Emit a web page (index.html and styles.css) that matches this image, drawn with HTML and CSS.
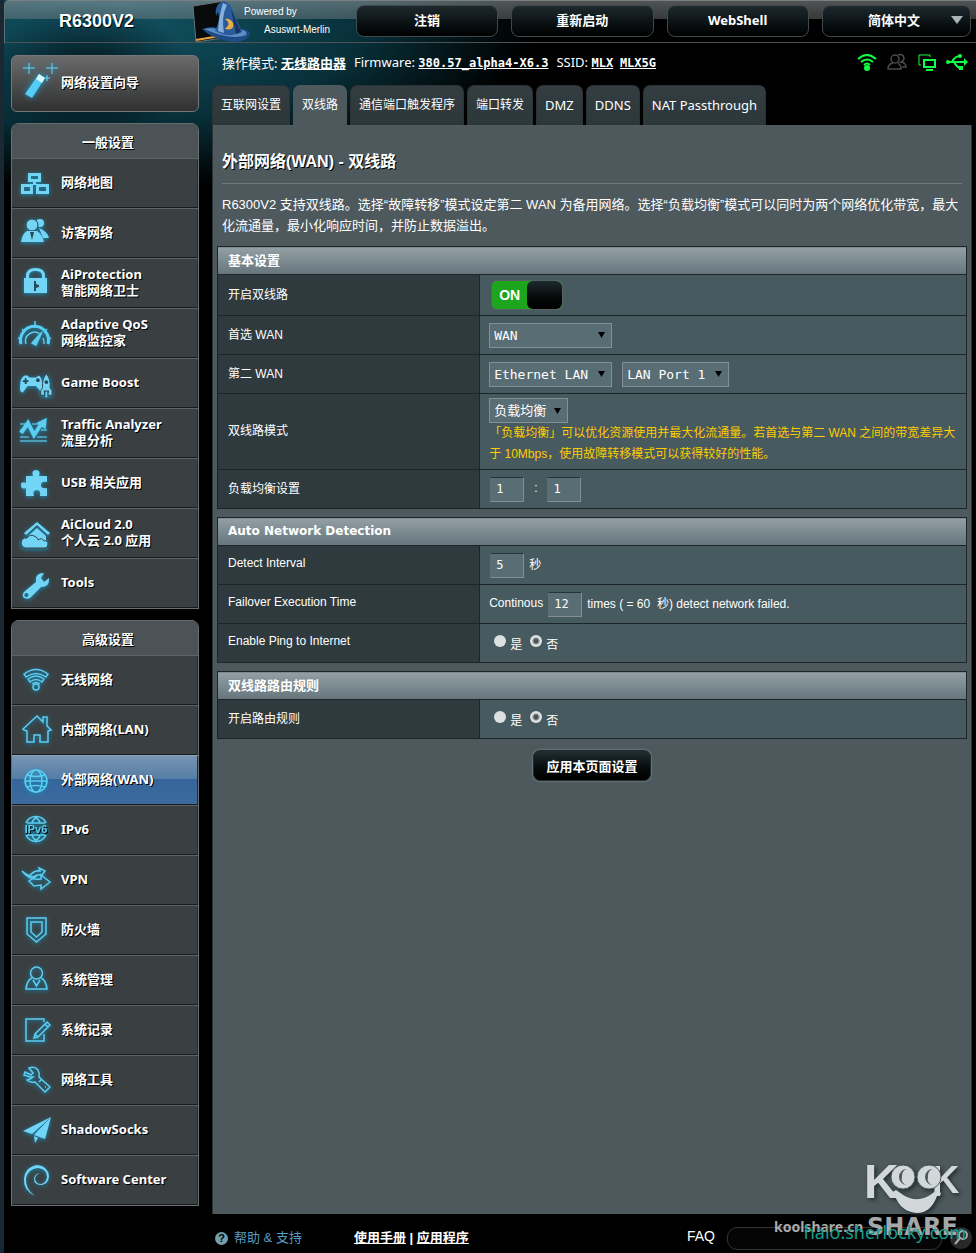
FILE: index.html
```html
<!DOCTYPE html>
<html lang="zh-CN">
<head>
  <meta charset="UTF-8">
  <title>R6300V2 - 双线路</title>
  <link rel="stylesheet" href="styles.css">
</head>
<body>
  <div class="page">
    <header class="top">
      <div class="model">R6300V2</div>
      <div class="brand">
        <svg class="hat" viewBox="0 0 60 42" aria-hidden="true">
          <path d="M1 5 33 0 38 36 4 41Z" fill="#080a0b" stroke="#6b7474"/>
          <path d="M4 39 28 35" stroke="#e9a33a" stroke-width="2"/>
          <path d="M10 28Q22 24 26 28L50 28Q58 29 58 33Q55 41 40 41Q20 38 10 28Z" fill="#1f4c86"/>
          <path d="M12 28Q22 26 27 29L50 29Q56 30 54 34Q40 40 12 28Z" fill="#5c8fc4"/>
          <path d="M23 30Q29 18 26 11L24 15Q22 3 32 0Q38 2 41 10L50 31Q38 38 23 30Z" fill="#2a5c9c"/>
          <path d="M31 2Q27 14 26 30L32 32Q29 15 35 4Z" fill="#83b0dc"/>
          <path d="M39 8 49 31 44 33Z" fill="#173563"/>
          <path d="M33 18Q40 22 33 28Q43 30 41 22Q38 17 33 18Z" fill="#e8ae45"/>
        </svg>
        <div class="powered"><span>Powered by</span><span class="merlin">Asuswrt-Merlin</span></div>
      </div>
      <nav class="top-buttons">
        <button type="button">注销</button>
        <button type="button">重新启动</button>
        <button type="button">WebShell</button>
        <button type="button" class="lang">简体中文<span class="caret"></span></button>
      </nav>
    </header>

    <div class="columns">
      <aside class="side">
        <a class="wizard" href="#">
          <svg viewBox="0 0 40 40" aria-hidden="true">
            <path d="M18 12 24 16 11 36 4 32Z" fill="#55cdf5"/>
            <path d="M18 12 24 16 21 21 15 17Z" fill="#d5f6ff"/>
            <path d="M8 1V12M2 6H14M31 1V12M25 6H37M26 13V19M23 16H29" stroke="#63d8fa"/>
          </svg>
          <span>网络设置向导</span>
        </a>

        <nav class="menu">
          <h2>一般设置</h2>
          <a href="#"><svg class="solid" viewBox="0 0 32 32"><path fill-rule="evenodd" d="M8 5H21V14H16V16H29V26H16V17H13V26H1V16H13V14H8ZM11 8V11H18V8ZM4 19V23H10V19ZM19 19V23H26V19Z"/></svg><span>网络地图</span></a>
          <a href="#"><svg class="solid" viewBox="0 0 32 32"><circle cx="20" cy="5" r="4"/><path d="M19 10Q27 13 29 20H23Z"/><circle cx="12" cy="7" r="6" stroke="#3a4042"/><path d="M7 13H17Q22 16 24 24H1Q2 16 7 13Z"/><path class="cut" d="M10 14 12 22 14 14Z"/></svg><span>访客网络</span></a>
          <a href="#"><svg class="solid" viewBox="0 0 32 32"><path fill-rule="evenodd" d="M6 10V8Q6 0 15.500 0Q25 0 25 8V10H27V25H4V10ZM9 10H22V8Q22 3 15.500 3Q9 3 9 8Z"/><path class="cut" d="M14 13H16V16L19 17V19L16 20V23H14Z"/></svg><span>AiProtection<br>智能网络卫士</span></a>
          <a href="#"><svg class="line" viewBox="0 0 32 32"><path stroke-width="3" d="M1 26A14 14 0 1 1 28 26"/><path d="M6 26A9 9 0 0 1 20 16M15 10V3M5 14 2 11M24 14 27 11M1 21-2 20M28 21 31 20M24 26Q24 22 23 20"/><path class="fill" d="M12 25 22 14 16 27Z"/></svg><span>Adaptive QoS<br>网络监控家</span></a>
          <a href="#"><svg class="solid" viewBox="0 0 34 32"><path d="M5 7H8L10 9H17L20 7Q24 9 24 22L22 24 17 18H8L3 25Q0 25 0 20Q0 9 5 7Z"/><path class="cut" d="M5 10H7V12H9V14H7V16H5V14H3V12H5Z"/><circle class="cut" cx="19" cy="12" r="2"/><path stroke="#3a4042" d="M28 5Q33 11 32 20L34 23V28H22V23L24 20Q23 11 28 5Z"/><circle class="cut" cx="28" cy="14" r="2"/><path class="cut" d="M25 23H31L30 29H26Z"/><path d="M27 24H29V30H27Z"/></svg><span>Game Boost</span></a>
          <a href="#"><svg class="line" viewBox="0 0 32 32"><path d="M0 6H6M12 6H19M0 12H3M21 12H27M0 19H9M17 19H27M0 23H27" opacity=".8"/><path stroke-width="4" d="M1 15 8 5 14 17 22 5"/><path class="fill" d="M18 5 26 1 25 10Z"/></svg><span>Traffic Analyzer<br>流里分析</span></a>
          <a href="#"><svg class="solid" viewBox="0 0 32 32"><path d="M6 8H13Q11 2 16 2Q21 2 19 8H27V14Q21 13 21 17Q21 21 27 20V28H20Q21 22 17 22Q12 22 14 28H6V20Q1 22 1 17Q1 13 6 15Z"/></svg><span>USB 相关应用</span></a>
          <a href="#"><svg class="solid" viewBox="0 0 32 32"><path d="M17 4 30 15 28 17 17 7 6 17 4 15Z"/><path d="M17 10 26 18V23H8V18Z"/><path stroke="#3a4042" d="M5 30Q1 29 1 25Q2 19 7 20Q10 15 16 19Q18 20 18 22Q22 19 24 23Q28 22 28 26Q28 30 25 30Z"/></svg><span>AiCloud 2.0<br>个人云 2.0 应用</span></a>
          <a href="#"><svg class="solid" viewBox="0 0 32 32"><path fill-rule="evenodd" d="M16 10Q17 5 24 5L21 10 24 14 29 10Q30 19 21 19L10 30Q6 32 3 29Q2 25 5 23L16 14ZM6 25A2 2 0 1 0 7 29A2 2 0 1 0 6 25Z"/></svg><span>Tools</span></a>
        </nav>

        <nav class="menu">
          <h2>高级设置</h2>
          <a href="#"><svg class="line" viewBox="0 0 32 32"><path d="M4 9Q16 0 28 9L26 12Q16 5 6 12ZM8 14Q16 8 24 14L22 17Q16 12 10 17Z"/><path d="M12 19Q16 16 20 19"/><circle cx="16" cy="22" r="3"/></svg><span>无线网络</span></a>
          <a href="#"><svg class="line" viewBox="0 0 32 32"><path d="M3 14 17 1 23 7V2H27V11L31 15 28 16V27H20V20H14V27H7V16L4 15Z"/></svg><span>内部网络(LAN)</span></a>
          <a href="#" class="active"><svg class="line" viewBox="0 0 32 32"><circle cx="16" cy="16" r="11"/><ellipse cx="16" cy="16" rx="6" ry="11"/><path d="M5 16H27M7 10Q16 13 25 10M7 22Q16 19 25 22"/></svg><span>外部网络(WAN)</span></a>
          <a href="#"><svg class="line" viewBox="0 0 32 32"><path d="M6 8A11 11 0 0 1 26 8M6 20A11 11 0 0 0 26 20M7 8H25M7 20H25M12 8Q13 4 16 3Q19 4 20 8M12 20Q13 24 16 25Q19 24 20 20"/><text x="16" y="18" text-anchor="middle">IPv6</text></svg><span>IPv6</span></a>
          <a href="#"><svg class="line" viewBox="0 0 32 32"><path d="M2 6Q9 12 15 12L9 16 14 21 21 20V24L30 17 21 10V14Q10 16 2 6ZM9 12Q13 5 20 6L19 3 25 6 22 10M12 13Q17 9 21 10"/></svg><span>VPN</span></a>
          <a href="#"><svg class="line" viewBox="0 0 32 32"><path d="M7 3H26V19L16.500 27 7 19ZM11 7H22V17L16.500 22 11 17Z"/></svg><span>防火墙</span></a>
          <a href="#"><svg class="line" viewBox="0 0 32 32"><circle cx="16.500" cy="8" r="6"/><path d="M12 13Q7 15 6 24H27Q26 15 21 13M13 15 16.500 21 20 15"/></svg><span>系统管理</span></a>
          <a href="#"><svg class="line" viewBox="0 0 32 32"><path d="M24 7V4H6V26H24V19M14 23 15 19 27 7 30 10 18 22ZM25 9 28 12M15 19 18 22"/></svg><span>系统记录</span></a>
          <a href="#"><svg class="line" viewBox="0 0 32 32"><path d="M5 7 11 10 13 8 9 3Q15 1 18 5Q20 9 19 12L30 22 25 27 15 17Q10 18 7 15L10 14 13 12 10 12 4 10ZM19 17 22 14M25 22H26"/></svg><span>网络工具</span></a>
          <a href="#"><svg class="solid" viewBox="0 0 32 32"><path d="M31 2 3 16 12 19ZM31 2 14 20 25 24ZM14 21 18 23 15 28Z"/></svg><span>ShadowSocks</span></a>
          <a href="#"><svg class="solid" viewBox="0 0 32 32"><path d="M15 31Q3 25 4 14Q5 2 17 0Q28 1 29 11Q29 18 22 20Q14 20 14 14Q14 9 20 8Q15 10 15 14Q16 19 21 19Q26 18 27 12Q27 4 18 3Q8 4 6 13Q5 24 15 31Z"/></svg><span>Software Center</span></a>
        </nav>
      </aside>

      <main class="content">
        <div class="status">
          <div class="info">
            <span>操作模式: <a href="#" class="operation">无线路由器</a></span>
            <span>Firmware: <a href="#">380.57_alpha4-X6.3</a></span>
            <span>SSID: <a href="#">MLX</a>&nbsp; <a href="#">MLX5G</a></span>
          </div>
          <div class="status-icons">
            <svg viewBox="0 0 22 18"><path d="M2 6Q11-2 20 6M5 9Q11 4 17 9M8 12Q11 9 14 12"/><circle cx="11" cy="15" r="2" fill="#1f4"/></svg>
            <svg class="off" viewBox="0 0 22 18"><circle cx="9" cy="6" r="4"/><path d="M7 10Q2 11 2 16H15Q15 12 12 10M12 2Q17 0 18 5Q18 8 15 9Q20 10 20 14H16"/></svg>
            <svg viewBox="0 0 22 18"><path d="M5 12H3V2H14V4" stroke-width="1" /><path d="M8 7H19V14H8ZM10 17H17"/></svg>
            <svg viewBox="0 0 22 18"><path d="M2 9H19M6 9Q9 3 14 3M8 9Q11 15 15 15"/><path d="M18 5 22 9 18 13ZM13 13H17V17H13Z" fill="#1f4" stroke="none"/><circle cx="2" cy="9" r="2" fill="#1f4" stroke="none"/><circle cx="14" cy="3" r="2" fill="#1f4" stroke="none"/></svg>
          </div>
        </div>

        <nav class="tabs">
          <a href="#">互联网设置</a>
          <a href="#" class="current">双线路</a>
          <a href="#">通信端口触发程序</a>
          <a href="#">端口转发</a>
          <a href="#">DMZ</a>
          <a href="#">DDNS</a>
          <a href="#">NAT Passthrough</a>
        </nav>

        <form class="panel">
          <h1>外部网络(WAN) - 双线路</h1>
          <p class="desc">R6300V2 支持双线路。选择“故障转移”模式设定第二 WAN 为备用网络。选择“负载均衡”模式可以同时为两个网络优化带宽，最大化流通量，最小化响应时间，并防止数据溢出。</p>

          <table>
            <colgroup><col class="name"><col></colgroup>
            <thead><tr><th colspan="2">基本设置</th></tr></thead>
            <tbody>
              <tr class="switch-row">
                <th><label for="dualwan">开启双线路</label></th>
                <td><label class="switch"><input type="checkbox" id="dualwan" checked><span class="on">ON</span><span class="knob"></span></label></td>
              </tr>
              <tr>
                <th><label for="primary">首选 WAN</label></th>
                <td><select id="primary" class="medium"><option>WAN</option></select></td>
              </tr>
              <tr>
                <th><label for="second">第二 WAN</label></th>
                <td><div class="fields"><select id="second" class="medium"><option>Ethernet LAN</option></select><select class="port" aria-label="LAN Port"><option>LAN Port 1</option></select></div></td>
              </tr>
              <tr>
                <th><label for="mode">双线路模式</label></th>
                <td class="mode-cell"><select id="mode" class="mode"><option>负载均衡</option></select>
                  <p class="hint">「负载均衡」可以优化资源使用并最大化流通量。若首选与第二 WAN 之间的带宽差异大于 10Mbps，使用故障转移模式可以获得较好的性能。</p></td>
              </tr>
              <tr>
                <th><label for="ratio">负载均衡设置</label></th>
                <td><div class="fields ratio"><input type="text" id="ratio" value="1"><span>:</span><input type="text" value="1" aria-label="第二 WAN"></div></td>
              </tr>
            </tbody>
          </table>

          <table>
            <colgroup><col class="name"><col></colgroup>
            <thead><tr><th colspan="2" class="wide">Auto Network Detection</th></tr></thead>
            <tbody>
              <tr>
                <th><label for="interval">Detect Interval</label></th>
                <td><div class="fields unit"><input type="text" id="interval" value="5"><span>秒</span></div></td>
              </tr>
              <tr>
                <th><label for="failover">Failover Execution Time</label></th>
                <td><div class="fields unit-text"><span>Continous</span><input type="text" id="failover" value="12"><span>times ( = 60 &nbsp;秒) detect network failed.</span></div></td>
              </tr>
              <tr>
                <th>Enable Ping to Internet</th>
                <td><div class="radios"><label><input type="radio" name="ping">是</label><label><input type="radio" name="ping" checked>否</label></div></td>
              </tr>
            </tbody>
          </table>

          <table>
            <colgroup><col class="name"><col></colgroup>
            <thead><tr><th colspan="2">双线路路由规则</th></tr></thead>
            <tbody>
              <tr>
                <th>开启路由规则</th>
                <td><div class="radios"><label><input type="radio" name="rules">是</label><label><input type="radio" name="rules" checked>否</label></div></td>
              </tr>
            </tbody>
          </table>

          <button type="button" class="apply">应用本页面设置</button>
        </form>
      </main>
    </div>

    <footer class="bottom">
      <span class="help-icon">?</span>
      <a href="#" class="help">帮助 &amp; 支持</a>
      <div class="docs"><a href="#">使用手册</a> | <a href="#">应用程序</a></div>
      <label for="faq">FAQ</label>
      <input type="text" id="faq">
      <button type="button" class="search" aria-label="FAQ"><svg viewBox="0 0 22 22"><circle cx="13" cy="8" r="4"/><path d="M10 11 5 17"/></svg></button>
    </footer>

    <div class="watermark">
      <svg viewBox="0 0 102 82" aria-hidden="true">
        <text x="3" y="79" class="share">SHARE</text>
        <g class="kook">
          <text x="0" y="42" class="k">K</text>
          <text x="68" y="37" class="k small">K</text>
          <circle cx="39" cy="21" r="12"/>
          <circle cx="65" cy="21" r="12"/>
          <path class="pupil" d="M43 13A8 8 0 1 0 43 29A6 6 0 0 1 38 21A7 7 0 0 1 43 13ZM69 13A8 8 0 1 0 69 29A6 6 0 0 1 64 21A7 7 0 0 1 69 13Z"/>
          <path class="smile" d="M27 37 32 34 35 36Q52 50 69 37L72 34 77 37 76 40 73 40Q67 57 53 57Q37 56 31 40L28 41Z"/>
        </g>
      </svg>
      <span class="site">koolshare.cn</span>
      <span class="halo">halo.sherlocky.com</span>
    </div>
  </div>
</body>
</html>
```
FILE: styles.css
```css
* {
  box-sizing: border-box;
}

body {
  margin: 0;
  background: #000;
  color: #fff;
  font-family: "Liberation Sans", "Noto Sans CJK SC", sans-serif;
  font-size: 12px;
}

a {
  color: #fff;
  text-decoration: none;
}

button,
input,
select {
  color: #fff;
  font-family: inherit;
}

.page {
  position: relative;
  display: flex;
  flex-direction: column;
  min-height: 100vh;
  border-left: 4px solid #192833;
  background:
    radial-gradient(ellipse 100px 75px at 85px 75px, rgba(0, 8, 12, 0.8), transparent),
    radial-gradient(ellipse 430px 170px at 100px 20px, #125566, #08303a 60%, transparent),
    #000;
}

/* header */
.top {
  display: flex;
  align-items: center;
  height: 43px;
  padding-right: 5px;
  border-top: 1px solid #777f82;
  border-bottom: 1px solid #4d5355;
  border-left: 1px solid #617177;
  border-top-left-radius: 5px;
  background: linear-gradient(rgba(160, 165, 168, 0.5), rgba(130, 136, 139, 0.42) 18px, transparent 18px);
}

.model {
  flex: 0 0 187px;
  padding-right: 4px;
  text-align: center;
  font-size: 18px;
  font-weight: bold;
  text-shadow: 1px 1px #000;
}

.brand {
  display: flex;
  flex: 0 0 164px;
}

.hat {
  width: 60px;
  height: 42px;
}

.powered {
  display: flex;
  flex-direction: column;
  gap: 6px;
  margin-left: -8px;
  padding-top: 5px;
  font-size: 10px;
  line-height: 12px;
}

.merlin {
  padding-left: 20px;
}

.top-buttons {
  display: flex;
  flex: 1;
  gap: 13px;
  padding-bottom: 2px;
}

.top-buttons button {
  flex: 1;
  height: 32px;
  padding: 0 0 2px;
  border: 1px solid #3f4a4d;
  border-radius: 8px;
  background: linear-gradient(#1e292d, #0a1012 60%, #000);
  font-family: "Noto Sans", "Noto Sans CJK SC", sans-serif;
  font-size: 13px;
  font-weight: bold;
}

.top-buttons .lang {
  display: flex;
  align-items: center;
  justify-content: flex-end;
  gap: 31px;
  padding-right: 7px;
}

.caret {
  border: 6px solid transparent;
  border-top: 8px solid #a9b3b8;
  border-bottom: 0;
}

/* left menu */
.columns {
  display: flex;
  flex: 1;
  gap: 13px;
  padding: 0 4px 0 7px;
}

.side {
  flex: 0 0 188px;
  padding-bottom: 8px;
}

.wizard,
.menu {
  font-family: "Noto Sans", "Noto Sans CJK SC", sans-serif;
  font-size: 13px;
  font-weight: bold;
  line-height: 16px;
  text-shadow: 1px 1px #000;
}

.wizard span,
.menu span {
  padding-bottom: 3px;
}

.wizard {
  display: flex;
  align-items: center;
  height: 57px;
  margin: 12px 0 11px;
  padding-left: 9px;
  border: 1px solid #777;
  border-radius: 6px;
  background: linear-gradient(#6b6b6b, #2f3031);
}

.wizard svg {
  width: 40px;
  height: 40px;
  margin-bottom: 4px;
  filter: drop-shadow(0 0 3px #149bd0);
}

.menu {
  margin-bottom: 11px;
  border: 1px solid #6a7072;
  border-top: 0;
  border-radius: 8px 8px 0 0;
  background: #3a4042;
  overflow: hidden;
}

.menu:last-child {
  margin-bottom: 0;
}

.menu h2 {
  height: 35px;
  margin: 0;
  padding-left: 6px;
  border-top: 1px solid #646c6f;
  background: #4b5356;
  font-size: 13px;
  line-height: 36px;
  text-align: center;
}

.menu a {
  display: flex;
  align-items: center;
  gap: 9px;
  height: 50px;
  padding-left: 8px;
  border-top: 1px solid #5d6466;
  box-shadow: inset 0 -1px #181c1d, inset -1px 0 #272c2e;
}

.menu .active {
  border-color: #8ba5be;
  background: linear-gradient(#7894b2, #557da6 23px, #35659b 23px, #3d6b9e);
}

.menu svg {
  flex: none;
  width: 32px;
  height: 32px;
  overflow: visible;
  filter: drop-shadow(0 1px 2px #1490bd);
}

.solid {
  fill: #73d5f6;
}

.line {
  fill: none;
  stroke: #5dcdf1;
  stroke-width: 1.5;
}

.line .fill {
  fill: #5dcdf1;
}

.line text {
  fill: #5dcdf1;
  stroke: none;
  font: bold 11px "Liberation Sans", sans-serif;
}

.cut {
  fill: #254b59;
}

/* right side */
.content {
  display: flex;
  flex: 1;
  flex-direction: column;
  min-width: 0;
}

.status {
  display: flex;
  align-items: center;
  justify-content: space-between;
  height: 38px;
  padding: 0 4px 0 10px;
  font-family: "Noto Sans", "Noto Sans CJK SC", sans-serif;
  font-size: 13px;
}

.info {
  display: flex;
  gap: 8px;
}

.info a {
  font-family: "DejaVu Sans Mono", monospace;
  font-size: 12px;
  font-weight: bold;
  text-decoration: underline;
}

.info .operation {
  font-family: "Noto Sans CJK SC", sans-serif;
  font-size: 13px;
}

.status-icons {
  display: flex;
  gap: 8px;
}

.status-icons svg {
  width: 22px;
  height: 18px;
  fill: none;
  stroke: #1f4;
  stroke-width: 2;
}

.status-icons .off {
  stroke: #4b4b4b;
  stroke-width: 1.5;
}

.tabs {
  display: flex;
  gap: 3px;
  margin-top: 4px;
  font-family: "Noto Sans", "Noto Sans CJK SC", sans-serif;
}

.tabs a {
  height: 40px;
  padding: 0 8px;
  border: 1px solid #2b3234;
  border-bottom: 0;
  border-radius: 7px 7px 0 0;
  background: linear-gradient(#343e42, #2c373a);
  line-height: 38px;
  white-space: nowrap;
}

.tabs a:nth-child(n + 5) {
  font-size: 13px;
}

.tabs .current {
  border-color: #4d595d;
  background: #4d595d;
}

.panel {
  flex: 1;
  padding: 25px 4px 20px;
  border-right: 1px solid #2b3537;
  border-left: 1px solid #2b3537;
  background: #4d595d;
}

h1 {
  margin: 0 5px 10px;
  padding-bottom: 9px;
  border-bottom: 1px solid #71797d;
  font-size: 16px;
  line-height: 24px;
  text-shadow: 1px 1px #000;
}

.desc {
  margin: 0 5px 10px;
  font-family: "Liberation Sans", "Noto Sans CJK TC", sans-serif;
  font-size: 13px;
  line-height: 21px;
}

table {
  width: 100%;
  margin-bottom: 8px;
  border-collapse: collapse;
  table-layout: fixed;
}

.name {
  width: 35%;
}

thead th {
  height: 28px;
  padding: 0 10px 2px;
  border: 1px solid #1c2629;
  background: linear-gradient(#92a0a5, #66757c);
  font-size: 13px;
  text-align: left;
}

thead .wide {
  font-family: "DejaVu Sans", sans-serif;
  font-size: 12px;
}

tbody th,
tbody td {
  height: 39px;
  border: 1px solid #1c2629;
}

tbody th {
  padding: 0 10px 4px;
  background: #2f3a3e;
  font-weight: normal;
  text-align: left;
}

tbody td {
  padding: 0 9px;
  background: #475a5f;
}

.switch-row th,
.switch-row td {
  height: 41px;
}

.switch {
  display: flex;
  width: 72px;
  height: 30px;
  margin-left: 2px;
  border: 1px solid #596367;
  border-radius: 6px;
  background: #1da51d;
}

.switch input {
  position: absolute;
  opacity: 0;
}

.on {
  flex: 1;
  font-size: 14px;
  font-weight: bold;
  line-height: 28px;
  text-align: center;
}

.knob {
  width: 35px;
  border-radius: 6px;
  background: linear-gradient(#1d2a2e, #050808 60%, #000);
}

select {
  display: block;
  height: 25px;
  padding: 0 4px;
  border: 1px solid #829093;
  border-radius: 0;
  appearance: none;
  background: #596d74 url("data:image/svg+xml,%3Csvg xmlns='http://www.w3.org/2000/svg' width='7' height='6'%3E%3Cpath d='M0 0H7L3.500 6Z'/%3E%3C/svg%3E") no-repeat right 6px center;
  font-family: "DejaVu Sans Mono", "Noto Sans CJK SC", monospace;
  font-size: 13px;
}

.medium {
  width: 123px;
}

.port {
  width: 107px;
}

.mode {
  width: 79px;
}

.mode-cell {
  height: 76px;
  padding-right: 4px;
}

.hint {
  margin: 0;
  color: #fc0;
  font-family: "Liberation Sans", "Noto Sans CJK TC", sans-serif;
  line-height: 21px;
}

.fields {
  display: flex;
  align-items: center;
  gap: 10px;
}

.fields span {
  padding-bottom: 3px;
}

.fields input {
  width: 34px;
  height: 25px;
  padding: 0 5px;
  border: 1px solid #829093;
  border-top-color: #26343a;
  border-left-color: #5c6d73;
  background: #596d74;
  font-family: "DejaVu Sans Mono", monospace;
  font-size: 12px;
}

.ratio,
.unit {
  padding-left: 1px;
}

.unit,
.unit-text {
  gap: 5px;
}

.radios {
  display: flex;
  gap: 8px;
  padding-left: 5px;
}

.radios label {
  display: flex;
  align-items: center;
  gap: 4px;
}

.radios input {
  width: 12px;
  height: 12px;
  margin: 0 0 4px;
  border-radius: 50%;
  appearance: none;
  background: #dce0e1;
}

.radios input:checked {
  background: radial-gradient(circle, #4b5558 2px, #dce0e1 4px);
}

.apply {
  display: block;
  height: 31px;
  margin: 11px auto 0;
  padding: 0 12px;
  border: 1px solid #202c30;
  border-radius: 7px;
  background: linear-gradient(#202e33, #060a0b 60%, #000);
  box-shadow: 0 0 2px #9aa;
  font-size: 13px;
  font-weight: bold;
}

/* footer */
.bottom {
  display: flex;
  align-items: center;
  height: 40px;
  padding: 8px 4px 0 211px;
  font-size: 13px;
}

.help-icon {
  width: 13px;
  height: 13px;
  border-radius: 50%;
  background: #739eae;
  color: #000;
  font-size: 11px;
  font-weight: bold;
  line-height: 13px;
  text-align: center;
}

.help {
  margin: 0 52px 0 6px;
  color: #569bc9;
}

.docs {
  margin-right: auto;
  font-weight: bold;
}

.help,
.docs,
.bottom label {
  padding-bottom: 4px;
}

.docs a {
  text-decoration: underline;
}

.bottom label {
  font-size: 14px;
}

.bottom input {
  width: 215px;
  height: 23px;
  margin: 0 8px 0 12px;
  border: 1px solid #333;
  border-radius: 10px;
  background: #050505;
}

.search {
  width: 22px;
  height: 22px;
  padding: 0;
  border: 0;
  border-radius: 50%;
  background: #292929;
}

.search svg {
  display: block;
  fill: none;
  stroke: #aaa;
  stroke-width: 2;
}

/* corner mark over the page */
.watermark {
  position: absolute;
  right: 10px;
  bottom: 8px;
  display: flex;
  justify-content: flex-end;
  width: 200px;
  height: 90px;
  pointer-events: none;
}

.watermark svg {
  width: 102px;
  height: 82px;
  overflow: visible;
}

.kook {
  fill: #d2d8da;
  filter: drop-shadow(2px 2px 2px #222c30);
}

.k {
  font: bold 48px "Liberation Sans", sans-serif;
}

.small {
  font-size: 38px;
}

.kook circle {
  stroke: #4d595d;
}

.pupil {
  fill: #4d595d;
}

.share {
  fill: #a3a8aa;
  font: bold 24px "DejaVu Sans", sans-serif;
}

.site,
.halo {
  position: absolute;
}

.site {
  bottom: 10px;
  left: 8px;
  color: #aaa;
  font: bold 14px "Noto Sans", sans-serif;
}

.halo {
  right: 0;
  bottom: 2px;
  color: #159c8c;
  font: 18px "Noto Sans", sans-serif;
}
```
